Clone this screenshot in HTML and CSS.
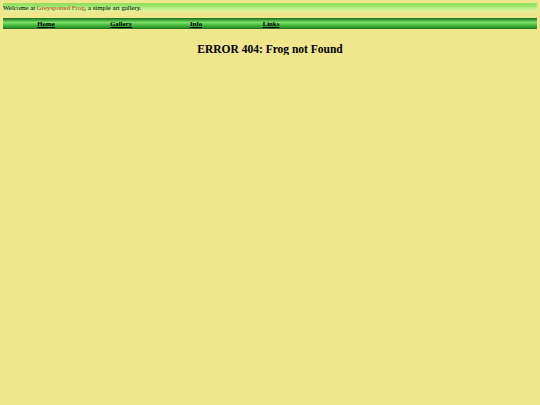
FILE: index.html
```html
<!DOCTYPE html>
<html>
<head>
<meta charset="utf-8">
<title>Greyspotted Frog</title>
<link rel="stylesheet" href="styles.css">
</head>
<body>
<div class="topbar">Welcome at <span class="brand">Greyspotted Frog</span>, a simple art gallery.</div>
<nav class="nav">
  <a href="#">Home</a>
  <a href="#">Gallery</a>
  <a href="#">Info</a>
  <a href="#">Links</a>
</nav>
<h1 class="title">ERROR 404: Frog not Found</h1>
</body>
</html>
```
FILE: styles.css
```css
html, body {
  background: #f0e68c;
}
body {
  margin: 3px;
  font-family: "Liberation Serif", "Times New Roman", serif;
  color: #000;
}
.topbar {
  height: 10px;
  margin-top: -1px;
  font-size: 6.8px;
  line-height: 11px;
  background: linear-gradient(to bottom, #8ade5a 0%, #98e468 35%, #c6f08c 70%, #e8f0a0 100%);
}
.brand {
  color: #c8441a;
}
.nav {
  display: flex;
  margin-top: 6px;
  padding-left: 5.5px;
  height: 11px;
  align-items: center;
  background: linear-gradient(to bottom, #1f6a1f 0%, #3aa23a 18%, #7ee06a 40%, #4cc040 62%, #34a030 82%, #1e6a1e 100%);
}
.nav a {
  width: 75px;
  text-align: center;
  font-size: 6.8px;
  font-weight: bold;
  color: #000;
  text-decoration: underline;
}
.title {
  margin: 14px 0 0;
  text-align: center;
  font-size: 11.5px;
  font-weight: bold;
}
```
